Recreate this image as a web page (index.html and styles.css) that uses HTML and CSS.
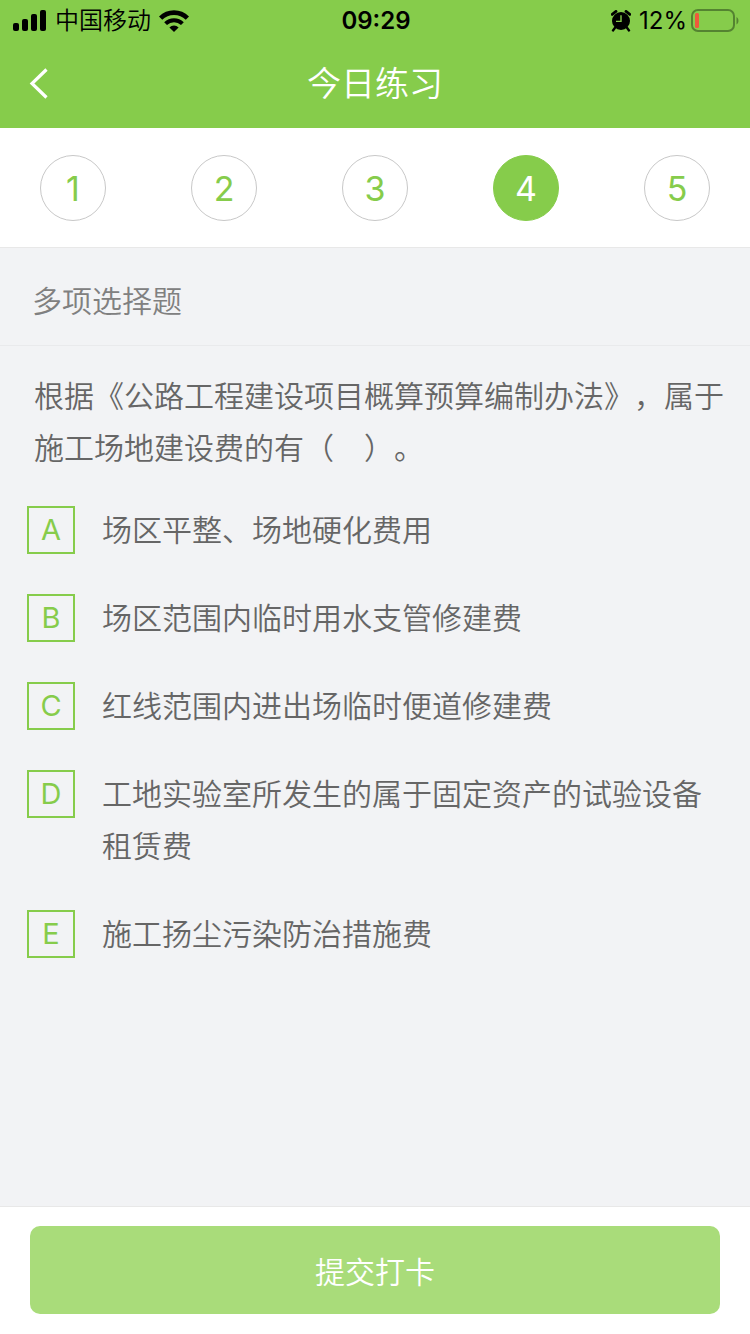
FILE: index.html
```html
<!DOCTYPE html>
<html lang="zh-CN">
<head>
    <meta charset="utf-8">
    <meta name="viewport" content="width=device-width, initial-scale=1">
    <title>今日练习</title>
    <link rel="stylesheet" href="styles.css">
</head>
<body>
    <header class="header">
        <div class="status-bar">
            <div class="status-left">
                <svg width="34" height="22" viewBox="0 0 34 22" aria-hidden="true">
                    <rect x="0" y="13" width="6" height="8" rx="2"/>
                    <rect x="9" y="9" width="6" height="12" rx="2"/>
                    <rect x="18" y="4" width="6" height="17" rx="2"/>
                    <rect x="27" y="0" width="6" height="21" rx="2"/>
                </svg>
                <span class="carrier">中国移动</span>
                <svg width="30" height="22" viewBox="0 0 30 22" aria-hidden="true">
                    <path d="M1.6 8.2a19 19 0 0 1 26.8 0" fill="none" stroke="#000" stroke-width="4.6"/>
                    <path d="M6.6 13.6a12 12 0 0 1 16.8 0" fill="none" stroke="#000" stroke-width="4"/>
                    <path d="M15 22l-4.6-4.6a6.6 6.6 0 0 1 9.2 0z"/>
                </svg>
            </div>
            <time class="clock">09:29</time>
            <div class="status-right">
                <svg class="alarm" width="20" height="22" viewBox="0 0 20 22" aria-hidden="true">
                    <circle cx="10" cy="11" r="9"/>
                    <path d="M1.2 4.4L5 1.4M18.8 4.4L15 1.4" stroke="#000" stroke-width="2.8" stroke-linecap="round"/>
                    <path d="M4.2 17.6l-2.2 2.8M15.8 17.6l2.2 2.8" stroke="#000" stroke-width="2.4" stroke-linecap="round"/>
                    <path d="M10 5.2v6.2H5" fill="none" stroke="#86cc4b" stroke-width="1.4"/>
                </svg>
                <span class="percent">12%</span>
                <svg width="48" height="24" viewBox="0 0 48 24" aria-hidden="true">
                    <rect x="1" y="1" width="42" height="21" rx="6" fill="none" stroke="#548331" stroke-width="2"/>
                    <rect x="4" y="4" width="4" height="15" rx="1.5" fill="#ee5a3c"/>
                    <path d="M45.5 8v7.5c2.6-1.4 2.6-6.1 0-7.5z" fill="#548331"/>
                </svg>
            </div>
        </div>
        <nav class="nav">
            <a class="back" href="#" aria-label="返回">
                <svg width="20" height="32" viewBox="0 0 20 32" aria-hidden="true">
                    <path d="M18.5 1.5L4 15.5l14.500 14" fill="none" stroke="#fff" stroke-width="3.2"/>
                </svg>
            </a>
            <h1 class="title">今日练习</h1>
        </nav>
    </header>

    <div class="steps">
        <button class="step" type="button">1</button>
        <button class="step" type="button">2</button>
        <button class="step" type="button">3</button>
        <button class="step active" type="button" aria-current="step">4</button>
        <button class="step" type="button">5</button>
    </div>

    <main class="main">
        <h2 class="question-type">多项选择题</h2>
        <p class="question">根据《公路工程建设项目概算预算编制办法》，属于施工场地建设费的有（　）。</p>
        <div class="options">
            <label class="option">
                <span class="mark"><input type="checkbox" name="answer" value="A"><span>A</span></span>
                <span class="option-text">场区平整、场地硬化费用</span>
            </label>
            <label class="option">
                <span class="mark"><input type="checkbox" name="answer" value="B"><span>B</span></span>
                <span class="option-text">场区范围内临时用水支管修建费</span>
            </label>
            <label class="option">
                <span class="mark"><input type="checkbox" name="answer" value="C"><span>C</span></span>
                <span class="option-text">红线范围内进出场临时便道修建费</span>
            </label>
            <label class="option">
                <span class="mark"><input type="checkbox" name="answer" value="D"><span>D</span></span>
                <span class="option-text">工地实验室所发生的属于固定资产的试验设备租赁费</span>
            </label>
            <label class="option">
                <span class="mark"><input type="checkbox" name="answer" value="E"><span>E</span></span>
                <span class="option-text">施工扬尘污染防治措施费</span>
            </label>
        </div>
    </main>

    <footer class="footer">
        <button class="submit" type="button">提交打卡</button>
    </footer>
</body>
</html>
```
FILE: styles.css
```css
* {
    box-sizing: border-box;
}

body {
    margin: 0;
    min-height: 100vh;
    display: flex;
    flex-direction: column;
    background-color: #f2f3f5;
    color: #666;
    font-family: Inter, "Noto Sans CJK SC", sans-serif;
    font-size: 30px;
    font-weight: 350;
    line-height: 52px;
    text-spacing-trim: space-all;
}

button {
    font-family: inherit;
    font-weight: inherit;
    padding: 0;
    border: 0;
}

h1,
h2,
p {
    margin: 0;
    font-weight: inherit;
}

.header {
    background-color: #86cc4b;
}

.status-bar {
    display: grid;
    grid-template-columns: 1fr auto 1fr;
    align-items: center;
    height: 40px;
    padding: 0 11px 0 13px;
    color: #000;
    font-size: 24px;
    line-height: 42px;
}

.status-left,
.status-right {
    display: flex;
    align-items: center;
}

.status-left {
    gap: 8px;
}

.status-right {
    justify-content: flex-end;
    gap: 4px;
}

.alarm {
    margin-right: 4px;
}

.clock {
    font-weight: 600;
}

.percent {
    font-weight: 400;
}

.nav {
    display: grid;
    grid-template-columns: 48px 1fr 48px;
    align-items: center;
    height: 88px;
    padding: 0 28px;
}

.back {
    display: flex;
}

.title {
    color: #fff;
    font-size: 34px;
    text-align: center;
}

.steps {
    display: flex;
    justify-content: space-between;
    padding: 27px 40px 26px;
    background-color: #fff;
    border-bottom: 1px solid #e8e8e8;
}

.step {
    width: 66px;
    height: 66px;
    border: 1px solid #c8c8c8;
    border-radius: 50%;
    background-color: #fff;
    color: #86cc4b;
    font-size: 34px;
    font-weight: 400;
}

.step.active {
    border-color: #86cc4b;
    background-color: #86cc4b;
    color: #fff;
}

.main {
    flex: 1;
}

.question-type {
    padding: 27px 32px 18px;
    border-bottom: 1px solid #e9eaec;
    color: #808080;
    font-size: 30px;
}

.question {
    padding: 24px 26px 0 34px;
}

.options {
    display: flex;
    flex-direction: column;
    gap: 36px;
    padding: 30px 27px;
}

.option {
    display: flex;
    gap: 27px;
}

.mark {
    display: grid;
    flex: none;
    place-items: center;
    width: 48px;
    height: 52px;
    color: #86cc4b;
    font-size: 29px;
    font-weight: 400;
}

.mark input,
.mark span {
    grid-area: 1 / 1;
}

.mark input {
    appearance: none;
    width: 48px;
    height: 48px;
    margin: 0;
    border: 2px solid #86cc4b;
}

.footer {
    padding: 19px 30px 20px;
    background-color: #fff;
    border-top: 1px solid #e8e8e8;
}

.submit {
    display: block;
    width: 100%;
    height: 88px;
    border-radius: 10px;
    background-color: #a9dc7a;
    color: #fff;
    font-size: 30px;
}
```
